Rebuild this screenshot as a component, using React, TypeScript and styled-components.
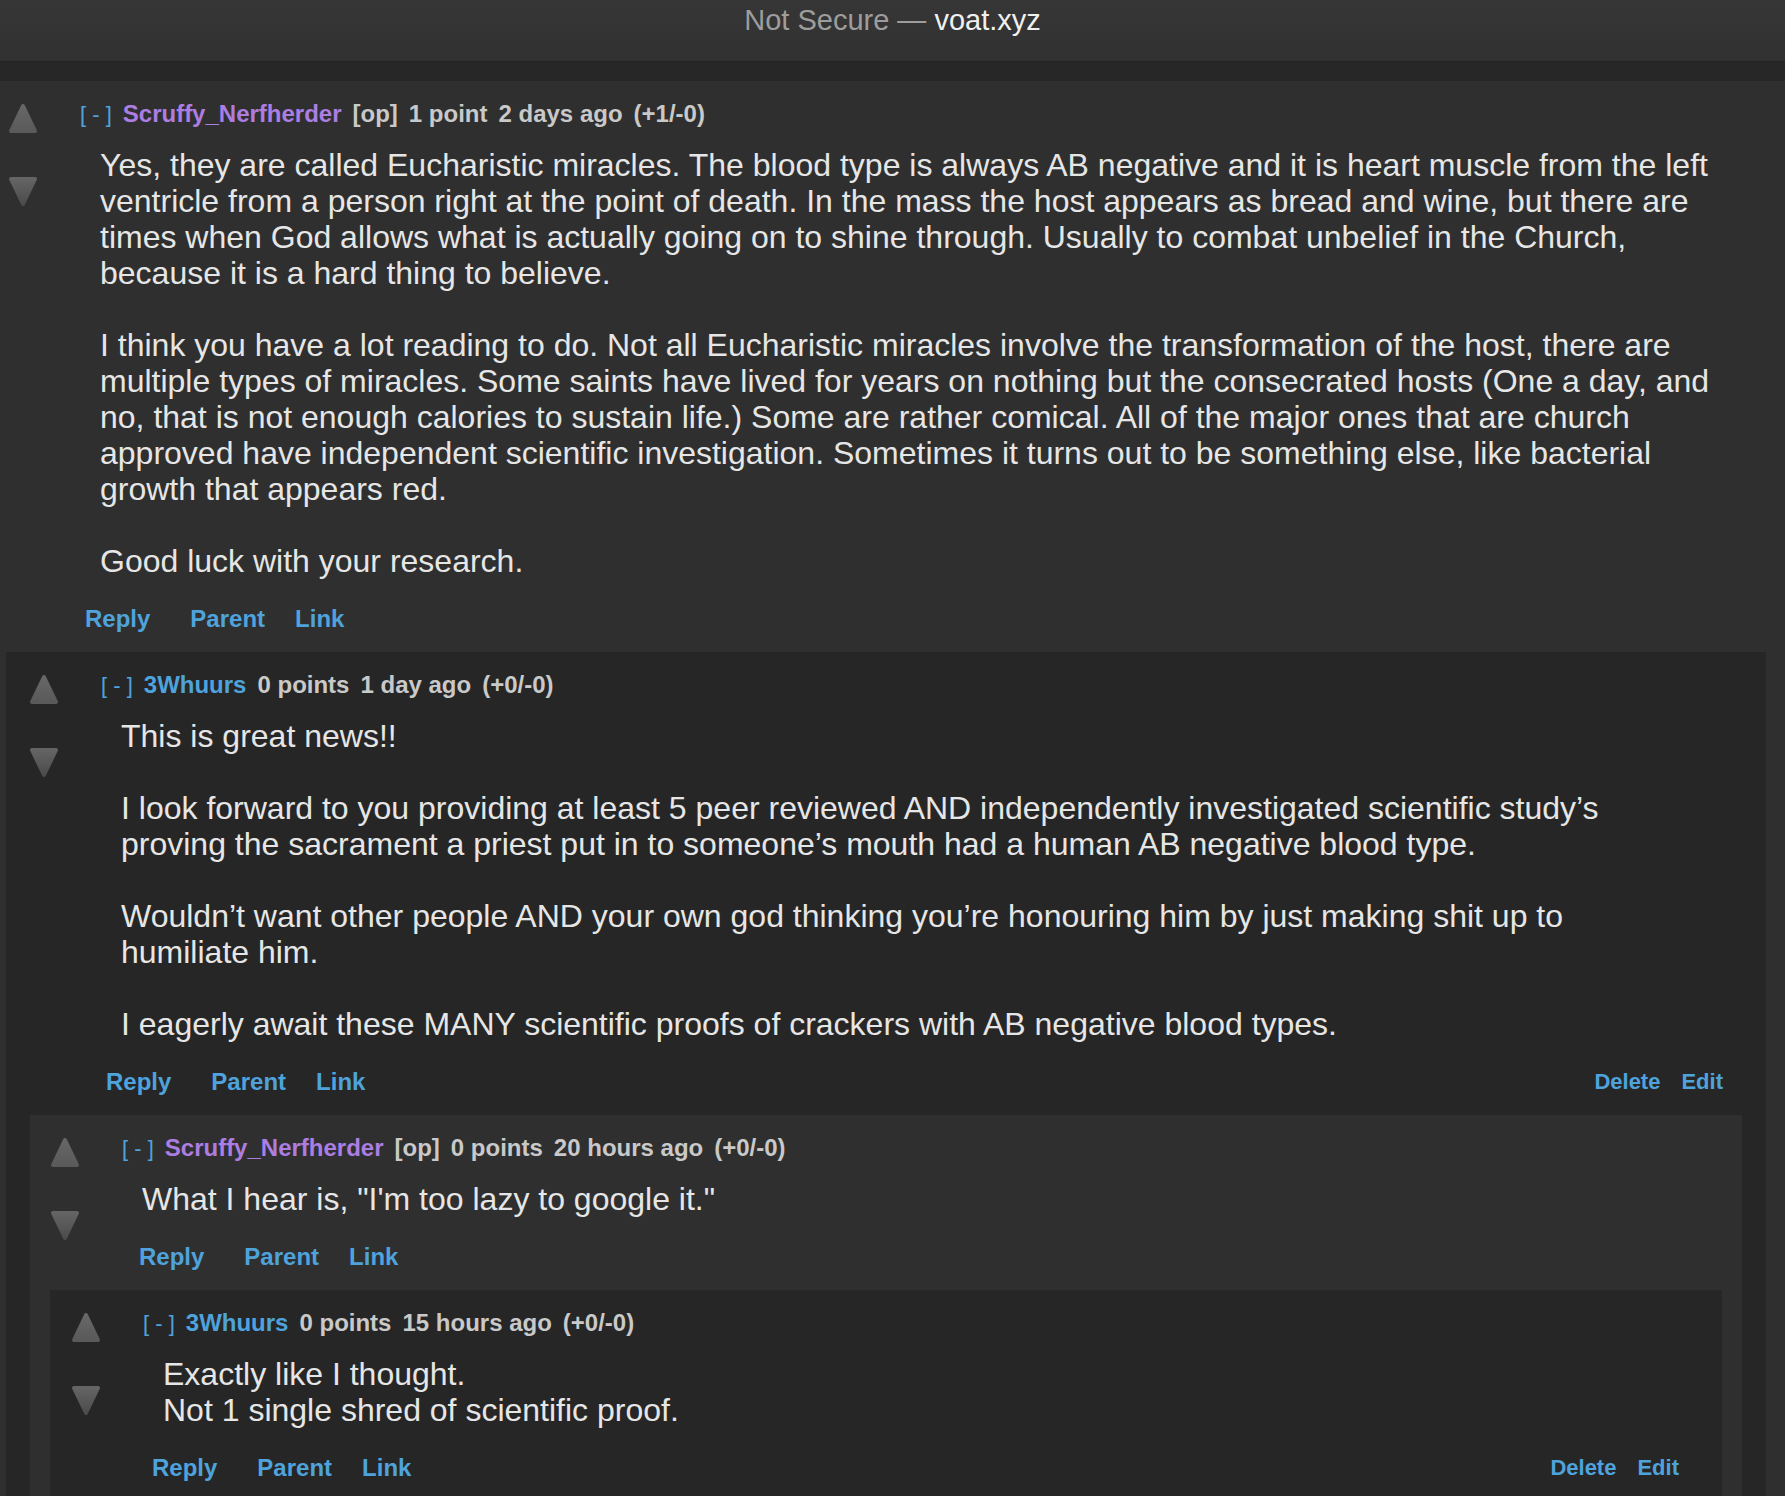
import React, { useId } from 'react';
import styled, { createGlobalStyle } from 'styled-components';

const COLORS = {
  page: '#2f2f2f',
  dark: '#262626',
  link: '#4fa3dc',
  purple: '#ac7ee2',
  meta: '#c9c9c9',
  text: '#e6e6e6',
};

const GlobalStyle = createGlobalStyle`
  html, body {
    margin: 0;
    padding: 0;
    background: ${COLORS.page};
    overflow: hidden;
  }

  body {
    font-family: "Liberation Sans", Arial, Helvetica, sans-serif;
    -webkit-font-smoothing: antialiased;
  }
`;

const TitleBar = styled.header`
  height: 61px;
  display: flex;
  justify-content: center;
  background: linear-gradient(#363636, #313131);
  font-size: 29px;
  line-height: 40px;
  color: #9d9d9d;
`;

const Host = styled.span`
  color: #f0f0f0;
`;

const Strip = styled.div`
  height: 19px;
  background-color: #272727;
  border-top: 1px solid #232323;
`;

const Box = styled.div<{ $depth: number }>`
  background-color: ${({ $depth }) => ($depth % 2 === 1 ? COLORS.dark : COLORS.page)};
  padding-bottom: 19px;
`;

const Row = styled.div`
  display: flex;
  flex-direction: row;
  align-items: flex-start;
`;

const Votes = styled.div<{ $left: number }>`
  display: flex;
  flex-direction: column;
  gap: 40px;
  flex-shrink: 0;
  width: 30px;
  padding-top: 22px;
  margin-left: ${({ $left }) => $left}px;
`;

const Main = styled.div`
  flex: 1;
  min-width: 0;
  margin-left: 42px;
  padding-top: 19px;
  padding-right: 43px;
`;

const Header = styled.div`
  display: flex;
  flex-direction: row;
  align-items: baseline;
  gap: 11px;
  height: 28px;
  line-height: 28px;
  font-size: 24px;
  font-weight: 700;
  color: ${COLORS.meta};
  white-space: nowrap;
`;

const Toggle = styled.span`
  font-size: 22px;
  font-weight: 400;
  color: ${COLORS.link};
`;

const Author = styled.span<{ $op?: boolean }>`
  color: ${({ $op }) => ($op ? COLORS.purple : COLORS.link)};
`;

const Body = styled.div<{ $wrap: number }>`
  margin-top: 19px;
  padding-left: 20px;
  padding-right: ${({ $wrap }) => $wrap}px;
  font-size: 32px;
  line-height: 36px;
  color: ${COLORS.text};
  white-space: pre-line;

  p {
    margin: 0 0 36px;
  }

  p:last-child {
    margin-bottom: 0;
  }
`;

const Actions = styled.div<{ $shift: number }>`
  display: flex;
  flex-direction: row;
  align-items: center;
  justify-content: space-between;
  margin-top: 26px;
  padding-left: ${({ $shift }) => $shift}px;
  height: 28px;
  line-height: 28px;
`;

const ActionGroup = styled.div`
  display: flex;
  flex-direction: row;
  gap: 30px;
`;

const ActionLink = styled.a`
  font-size: 24px;
  font-weight: 700;
  color: ${COLORS.link};
  cursor: pointer;

  &:first-child {
    margin-right: 10px;
  }
`;

const OwnerGroup = styled.div`
  display: flex;
  flex-direction: row;
  gap: 21px;
`;

const OwnerLink = styled.a`
  font-size: 22px;
  font-weight: 700;
  color: ${COLORS.link};
  cursor: pointer;
`;

const Children = styled.div<{ $inset: [number, number] }>`
  margin: 19px ${({ $inset }) => $inset[1]}px 0 ${({ $inset }) => $inset[0]}px;
`;

type CommentData = {
  author: string;
  op?: boolean;
  points: string;
  age: string;
  votes: string;
  body: string[];
  mine?: boolean;
  children?: CommentData[];
};

// per nesting level: arrow offset, action row nudge, body wrap, child inset
const DEPTH: { votes: number; shift: number; wrap: number; inset: [number, number] }[] = [
  { votes: 8, shift: 5, wrap: 7, inset: [6, 19] },
  { votes: 23, shift: 5, wrap: 63, inset: [24, 24] },
  { votes: 20, shift: 17, wrap: 40, inset: [20, 20] },
  { votes: 21, shift: 9, wrap: 40, inset: [20, 20] },
];

const THREAD: CommentData = {
  author: 'Scruffy_Nerfherder',
  op: true,
  points: '1 point',
  age: '2 days ago',
  votes: '(+1/-0)',
  body: [
    'Yes, they are called Eucharistic miracles. The blood type is always AB negative and it is heart muscle from the left ventricle from a person right at the point of death. In the mass the host appears as bread and wine, but there are times when God allows what is actually going on to shine through. Usually to combat unbelief in the Church, because it is a hard thing to believe.',
    'I think you have a lot reading to do. Not all Eucharistic miracles involve the transformation of the host, there are multiple types of miracles. Some saints have lived for years on nothing but the consecrated hosts (One a day, and no, that is not enough calories to sustain life.) Some are rather comical. All of the major ones that are church approved have independent scientific investigation. Sometimes it turns out to be something else, like bacterial growth that appears red.',
    'Good luck with your research.',
  ],
  children: [
    {
      author: '3Whuurs',
      points: '0 points',
      age: '1 day ago',
      votes: '(+0/-0)',
      mine: true,
      body: [
        'This is great news!!',
        'I look forward to you providing at least 5 peer reviewed AND independently investigated scientific study’s proving the sacrament a priest put in to someone’s mouth had a human AB negative blood type.',
        'Wouldn’t want other people AND your own god thinking you’re honouring him by just making shit up to humiliate him.',
        'I eagerly await these MANY scientific proofs of crackers with AB negative blood types.',
      ],
      children: [
        {
          author: 'Scruffy_Nerfherder',
          op: true,
          points: '0 points',
          age: '20 hours ago',
          votes: '(+0/-0)',
          body: ['What I hear is, "I\'m too lazy to google it."'],
          children: [
            {
              author: '3Whuurs',
              points: '0 points',
              age: '15 hours ago',
              votes: '(+0/-0)',
              mine: true,
              body: ['Exactly like I thought.\nNot 1 single shred of scientific proof.'],
            },
          ],
        },
      ],
    },
  ],
};

function VoteArrow({ dir }: { dir: 'up' | 'down' }) {
  const id = 'g' + useId().replace(/[^a-zA-Z0-9]/g, '');
  const d = dir === 'up' ? 'M15 3 L27 28 L3 28 Z' : 'M3 4 L27 4 L15 29 Z';
  return (
    <svg width="30" height="32" viewBox="0 0 30 32">
      <defs>
        <linearGradient id={id} x1="0" y1="0" x2="0" y2="1">
          <stop offset="0" stopColor={dir === 'up' ? '#676767' : '#646464'} />
          <stop offset="1" stopColor={dir === 'up' ? '#5a5a5a' : '#4c4c4c'} />
        </linearGradient>
      </defs>
      <path d={d} fill={`url(#${id})`} stroke={`url(#${id})`} strokeWidth="4" strokeLinejoin="round" />
    </svg>
  );
}

function Comment({ data, depth }: { data: CommentData; depth: number }) {
  const cfg = DEPTH[depth];
  return (
    <Box $depth={depth}>
      <Row>
        <Votes $left={cfg.votes}>
          <VoteArrow dir="up" />
          <VoteArrow dir="down" />
        </Votes>
        <Main>
          <Header>
            <Toggle>[ - ]</Toggle>
            <Author $op={data.op}>{data.author}</Author>
            {data.op && <span>[op]</span>}
            <span>{data.points}</span>
            <span>{data.age}</span>
            <span>{data.votes}</span>
          </Header>
          <Body $wrap={cfg.wrap}>
            {data.body.map((p, i) => (
              <p key={i}>{p}</p>
            ))}
          </Body>
          <Actions $shift={cfg.shift}>
            <ActionGroup>
              <ActionLink>Reply</ActionLink>
              <ActionLink>Parent</ActionLink>
              <ActionLink>Link</ActionLink>
            </ActionGroup>
            {data.mine && (
              <OwnerGroup>
                <OwnerLink>Delete</OwnerLink>
                <OwnerLink>Edit</OwnerLink>
              </OwnerGroup>
            )}
          </Actions>
        </Main>
      </Row>
      {data.children && (
        <Children $inset={cfg.inset}>
          {data.children.map((c, i) => (
            <Comment key={i} data={c} depth={depth + 1} />
          ))}
        </Children>
      )}
    </Box>
  );
}

export default function App() {
  return (
    <>
      <GlobalStyle />
      <TitleBar>
        <span>
          Not Secure — <Host>voat.xyz</Host>
        </span>
      </TitleBar>
      <Strip />
      <Comment data={THREAD} depth={0} />
    </>
  );
}
